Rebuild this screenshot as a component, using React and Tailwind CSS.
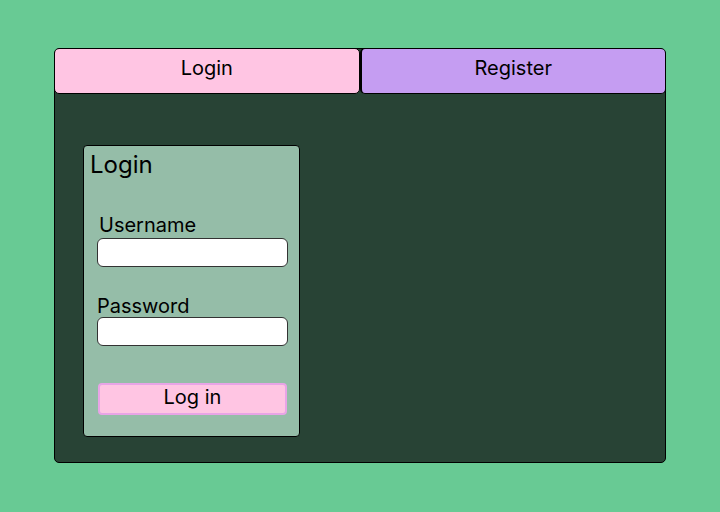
export default function App() {
  return (
    <div className="w-[720px] h-[512px] bg-[#68ca94] pt-[48px] pl-[54px]" style={{ fontFamily: "Inter, 'Noto Sans', sans-serif" }}>
      <div className="w-[612px] h-[415px] bg-[#284335] border border-black rounded-[5px] flex flex-col overflow-hidden">
        <div className="flex h-[45px] shrink-0">
          <button className="flex-1 bg-[#ffc5e3] border border-black rounded-[5px] text-[20px] leading-[24px] pb-[6px] text-black -ml-px -mt-px">Login</button>
          <button className="flex-1 bg-[#c59df2] border-y border-r border-l-2 border-black rounded-[5px] text-[20px] leading-[24px] pb-[6px] text-black -mr-px -mt-px">Register</button>
        </div>
        <div className="pl-[28px] pt-[51px]">
          <div className="w-[217px] bg-[#95bda8] border border-black rounded-[4px] pt-[5px] pb-[21px] flex flex-col">
            <h2 className="text-[24px] leading-[28px] pl-[6px] text-black">Login</h2>
            <label className="mt-[34px] ml-[15px] text-[20px] leading-[24px] text-black">Username</label>
            <input className="mt-[1px] ml-[13px] w-[191px] h-[29px] bg-white border border-[#333] rounded-[6px]" />
            <label className="mt-[27px] ml-[13px] text-[20px] leading-[24px] text-black">Password</label>
            <input className="-mt-px ml-[13px] w-[191px] h-[29px] bg-white border border-[#333] rounded-[6px]" />
            <button className="mt-[37px] ml-[14px] w-[189px] h-[32px] bg-[#ffc5e3] border-2 border-[#e8a4e6] rounded-[4px] text-[20px] leading-[24px] pb-[4px] text-black">Log in</button>
          </div>
        </div>
      </div>
    </div>
  );
}
